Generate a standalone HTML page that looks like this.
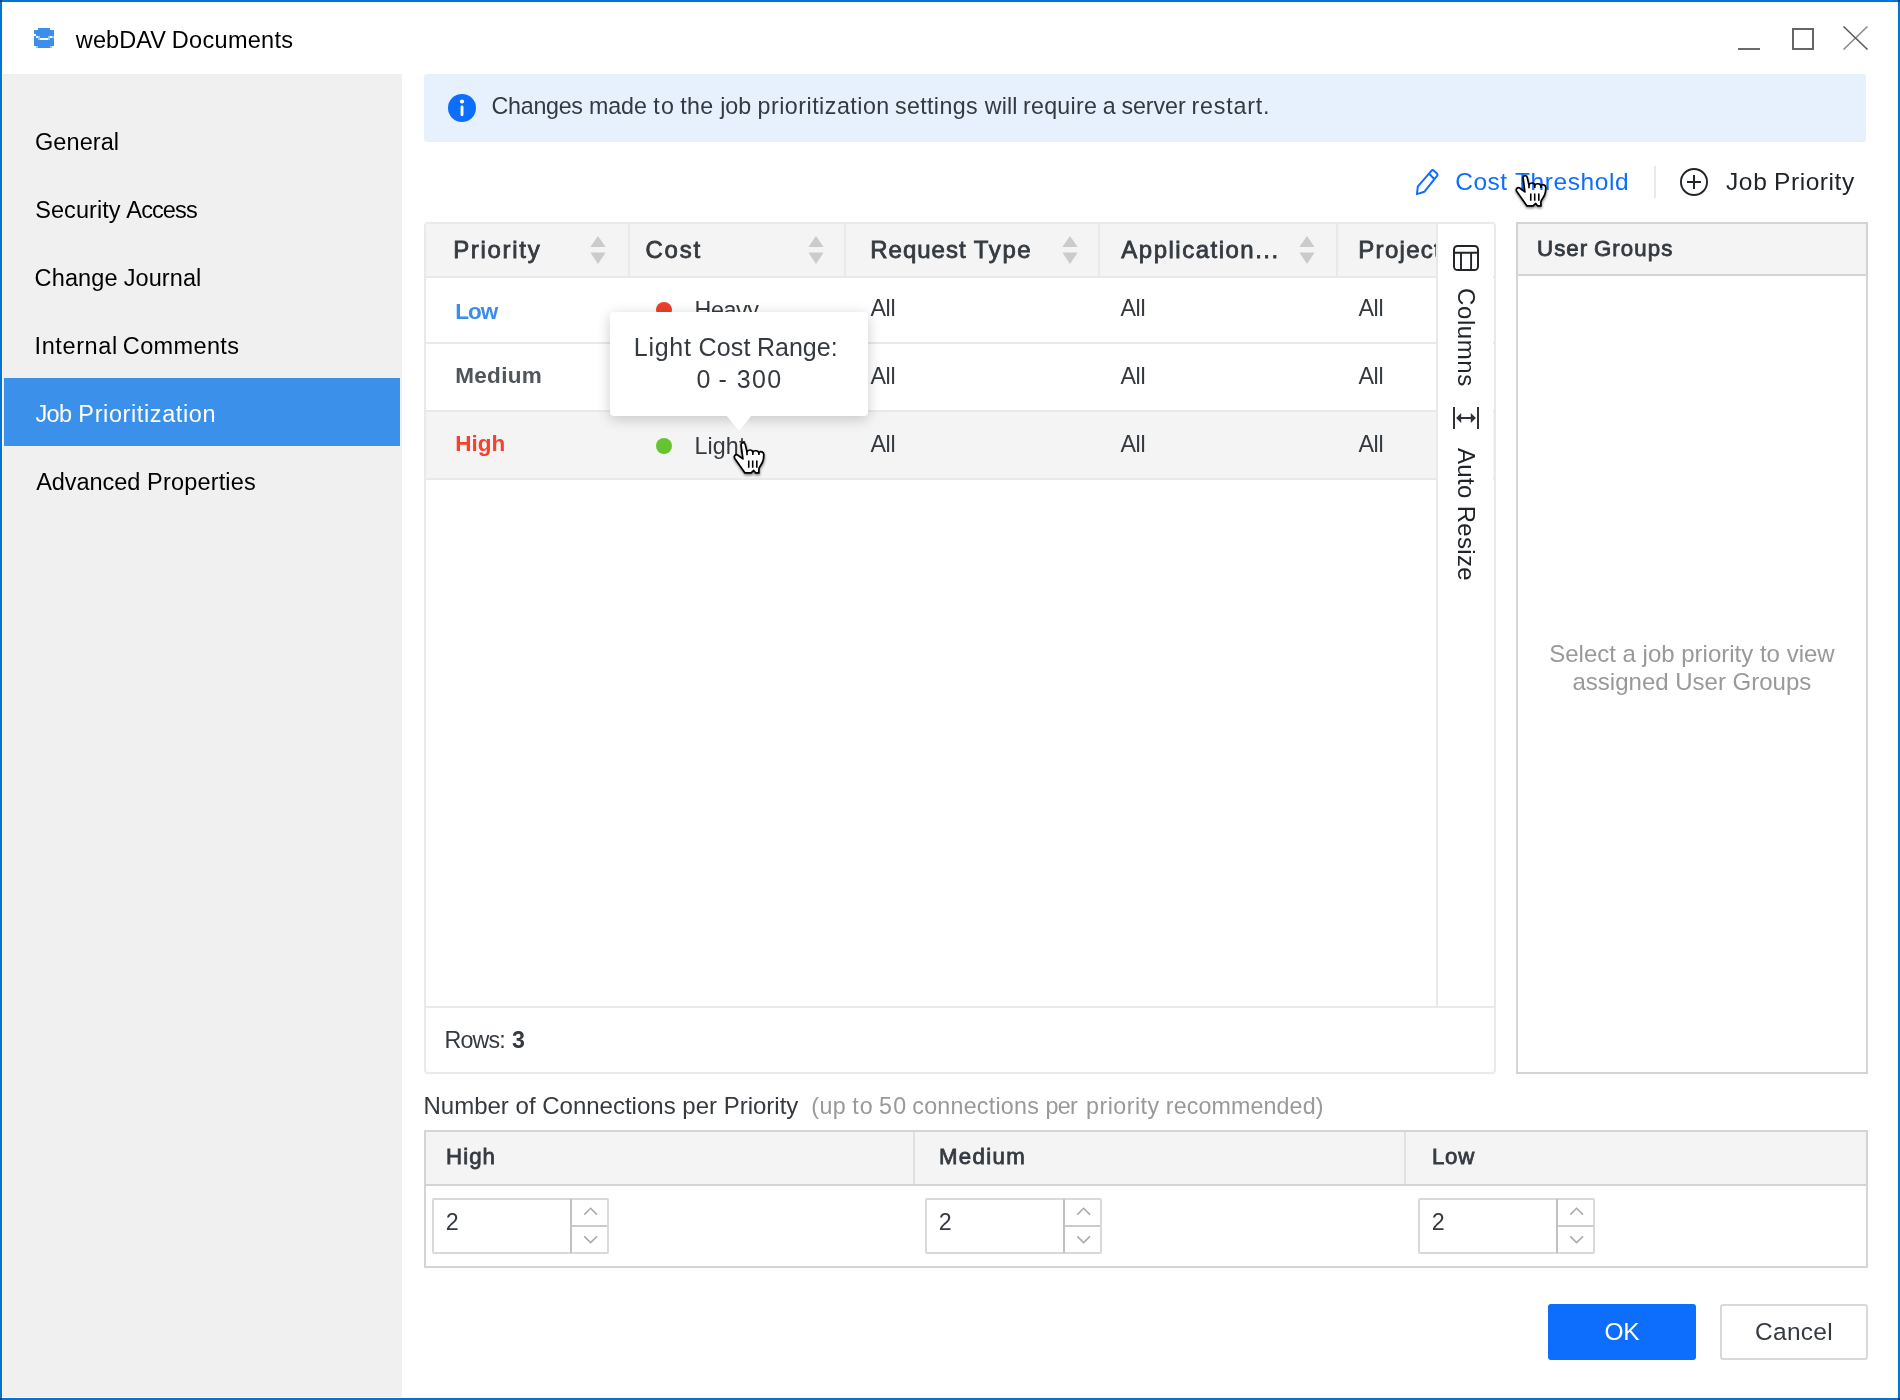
<!DOCTYPE html>
<html lang="en">
<head>
<meta charset="utf-8">
<title>webDAV Documents</title>
<style>
html,body{margin:0;padding:0;}
body{width:1900px;height:1400px;position:relative;overflow:hidden;background:#fff;font-family:"Liberation Sans", Arial, sans-serif;color:#343a40;}
.t{position:absolute;white-space:nowrap;line-height:1;}
svg{position:absolute;overflow:visible;}

</style>
</head>
<body>
<header class="titlebar">
<div style="position:absolute;left:0px;top:0px;width:1900px;height:1400px;box-sizing:border-box;border:2px solid #0274d3;pointer-events:none;z-index:50;"></div>
<div style="position:absolute;left:0px;top:0px;width:2px;height:2px;background:#02396a;z-index:51;"></div>
<div style="position:absolute;left:1898px;top:0px;width:2px;height:2px;background:#02396a;z-index:51;"></div>
<div style="position:absolute;left:0px;top:1398px;width:2px;height:2px;background:#02396a;z-index:51;"></div>
<div style="position:absolute;left:1898px;top:1398px;width:2px;height:2px;background:#02396a;z-index:51;"></div>
<svg style="left:34px;top:28px" width="20" height="20" viewBox="0 0 10 10" shape-rendering="crispEdges"><g fill="#3b8fea"><rect x="2" y="0" width="6" height="1"/><rect x="0" y="1" width="10" height="2"/><rect x="1" y="3" width="9" height="1"/><rect x="0" y="4" width="1" height="1"/><rect x="3" y="4" width="4" height="1"/><rect x="0" y="5" width="2" height="1"/><rect x="8" y="5" width="2" height="1"/><rect x="0" y="6" width="10" height="3"/><rect x="2" y="9" width="6" height="1"/></g><g fill="#9cc7f4"><rect x="2" y="4" width="1" height="2"/><rect x="7" y="4" width="1" height="2"/><rect x="9" y="4" width="1" height="1"/><rect x="1" y="9" width="1" height="1"/><rect x="8" y="9" width="1" height="1"/></g></svg>
<span class="t" style="left:75.83px;top:28.61px;font-size:23.5px;color:#000;letter-spacing:0.096px;">webDAV</span>
<span class="t" style="left:171.87px;top:28.61px;font-size:23.5px;color:#000;letter-spacing:0.290px;">Documents</span>
<div style="position:absolute;left:1738px;top:48px;width:22px;height:2px;background:#6b6b6b;"></div>
<div style="position:absolute;left:1792px;top:28px;width:22px;height:22px;box-sizing:border-box;border:2px solid #666;"></div>
<svg style="left:1843px;top:26px" width="25" height="24" viewBox="0 0 25 24"><path d="M24.5 0.5 L0.5 23.5" stroke="#8a8a8a" stroke-width="1.6" fill="none"/><path d="M0.5 0.5 L24.5 23.5" stroke="#5a5a5a" stroke-width="1.6" fill="none"/></svg>
</header>
<nav class="sidebar" aria-label="Sections">
<div style="position:absolute;left:2px;top:74px;width:400px;height:1324px;background:#f0f0f0;border-left:1px solid #fcf7f1;border-bottom:1px solid #fcf7f1;box-sizing:border-box;"></div>
<div style="position:absolute;left:4px;top:378px;width:396px;height:68px;background:#3b91ea;"></div>
<span class="t" style="left:35.02px;top:130.61px;font-size:23.5px;color:#000;letter-spacing:0.074px;">General</span>
<span class="t" style="left:35.23px;top:198.61px;font-size:23.5px;color:#000;letter-spacing:0.060px;">Security</span>
<span class="t" style="left:126.35px;top:198.61px;font-size:23.5px;color:#000;letter-spacing:-0.891px;">Access</span>
<span class="t" style="left:34.61px;top:266.61px;font-size:23.5px;color:#000;letter-spacing:0.122px;">Change</span>
<span class="t" style="left:123.63px;top:266.61px;font-size:23.5px;color:#000;letter-spacing:0.094px;">Journal</span>
<span class="t" style="left:34.53px;top:334.61px;font-size:23.5px;color:#000;letter-spacing:0.607px;">Internal</span>
<span class="t" style="left:122.81px;top:334.61px;font-size:23.5px;color:#000;letter-spacing:0.374px;">Comments</span>
<span class="t" style="left:35.43px;top:402.61px;font-size:23.5px;color:#fff;letter-spacing:-0.668px;">Job</span>
<span class="t" style="left:78.37px;top:402.61px;font-size:23.5px;color:#fff;letter-spacing:0.604px;">Prioritization</span>
<span class="t" style="left:36.25px;top:470.61px;font-size:23.5px;color:#000;letter-spacing:-0.067px;">Advanced</span>
<span class="t" style="left:147.07px;top:470.61px;font-size:23.5px;color:#000;letter-spacing:0.174px;">Properties</span>
</nav>
<main class="content">
<section class="banner" role="status">
<div style="position:absolute;left:424px;top:74px;width:1442px;height:68px;background:#e7f0fd;border-radius:3px;"></div>
<svg style="left:448px;top:94px" width="28" height="28" viewBox="0 0 28 28"><circle cx="14" cy="14" r="14" fill="#0d6efd"/><ellipse cx="14" cy="7.5" rx="2.1" ry="1.9" fill="#fff"/><rect x="12.55" y="11.6" width="2.9" height="10.7" rx="1.45" fill="#fff"/></svg>
<span class="t" style="left:491.62px;top:94.82px;font-size:23.25px;letter-spacing:-0.293px;">Changes</span>
<span class="t" style="left:588.96px;top:94.82px;font-size:23.25px;letter-spacing:-0.098px;">made</span>
<span class="t" style="left:653.15px;top:94.82px;font-size:23.25px;letter-spacing:1.438px;">to</span>
<span class="t" style="left:680.35px;top:94.82px;font-size:23.25px;letter-spacing:0.228px;">the</span>
<span class="t" style="left:720.37px;top:94.82px;font-size:23.25px;letter-spacing:-0.161px;">job</span>
<span class="t" style="left:757.50px;top:94.82px;font-size:23.25px;letter-spacing:0.497px;">prioritization</span>
<span class="t" style="left:894.95px;top:94.82px;font-size:23.25px;letter-spacing:0.364px;">settings</span>
<span class="t" style="left:984.83px;top:94.82px;font-size:23.25px;letter-spacing:0.075px;">will</span>
<span class="t" style="left:1023.06px;top:94.82px;font-size:23.25px;letter-spacing:0.234px;">require</span>
<span class="t" style="left:1102.81px;top:94.82px;font-size:23.25px;letter-spacing:-2.050px;">a</span>
<span class="t" style="left:1121.45px;top:94.82px;font-size:23.25px;letter-spacing:-0.075px;">server</span>
<span class="t" style="left:1191.46px;top:94.82px;font-size:23.25px;letter-spacing:0.815px;">restart.</span>
</section>
<section class="toolbar">
<svg style="left:1405px;top:160px" width="45" height="45" viewBox="0 0 45 45"><path d="M12.9 26.4 L26.6 10.7 Q27.6 9.6 28.7 10.6 L32 13.5 Q33.1 14.5 32.2 15.7 L19.3 31.8 L11.9 34.1 Z M24.1 13.8 L29.3 19" fill="none" stroke="#0d6efd" stroke-width="2" stroke-linejoin="round" stroke-linecap="round"/></svg>
<span class="t" style="left:1455.26px;top:169.76px;font-size:24.5px;color:#0d6efd;letter-spacing:0.511px;">Cost</span>
<span class="t" style="left:1514.95px;top:169.76px;font-size:24.5px;color:#0d6efd;letter-spacing:0.585px;">Threshold</span>
<div style="position:absolute;left:1654px;top:166px;width:2px;height:32px;background:#e9e9e9;"></div>
<svg style="left:1679px;top:167px" width="30" height="30" viewBox="0 0 30 30"><circle cx="15" cy="15" r="13.05" fill="none" stroke="#212529" stroke-width="1.9"/><path d="M8 15 H22 M15 8 V22" stroke="#212529" stroke-width="2" fill="none"/></svg>
<span class="t" style="left:1725.92px;top:169.76px;font-size:24.5px;color:#212529;letter-spacing:0.698px;">Job</span>
<span class="t" style="left:1773.99px;top:169.76px;font-size:24.5px;color:#212529;letter-spacing:0.575px;">Priority</span>
</section>
<section class="grid" aria-label="Job priorities">
<div style="position:absolute;left:424px;top:222px;width:1072px;height:852px;box-sizing:border-box;border:2px solid #e8eaea;border-radius:4px;background:#fff;"></div>
<div style="position:absolute;left:426px;top:224px;width:1011px;height:52px;background:#f4f4f4;"></div>
<div style="position:absolute;left:426px;top:276px;width:1068px;height:2px;background:#e8eaea;"></div>
<div style="position:absolute;left:628px;top:224px;width:2px;height:52px;background:#e8eaea;"></div>
<div style="position:absolute;left:844px;top:224px;width:2px;height:52px;background:#e8eaea;"></div>
<div style="position:absolute;left:1098px;top:224px;width:2px;height:52px;background:#e8eaea;"></div>
<div style="position:absolute;left:1336px;top:224px;width:2px;height:52px;background:#e8eaea;"></div>
<span class="t" style="left:453.13px;top:238.18px;font-size:24px;letter-spacing:1.692px;-webkit-text-stroke:0.8px #343a40;">Priority</span>
<svg style="left:589.5px;top:236.3px" width="16" height="28" viewBox="0 0 16 28"><path d="M8 0 L15.6 11 H0.4 Z M0.4 16.6 H15.6 L8 28 Z" fill="#cbcbcb"/></svg>
<span class="t" style="left:645.48px;top:238.18px;font-size:24px;letter-spacing:1.778px;-webkit-text-stroke:0.8px #343a40;">Cost</span>
<svg style="left:807.5px;top:236.3px" width="16" height="28" viewBox="0 0 16 28"><path d="M8 0 L15.6 11 H0.4 Z M0.4 16.6 H15.6 L8 28 Z" fill="#cbcbcb"/></svg>
<span class="t" style="left:870.23px;top:238.18px;font-size:24px;letter-spacing:0.992px;-webkit-text-stroke:0.8px #343a40;">Request</span>
<span class="t" style="left:973.86px;top:238.18px;font-size:24px;letter-spacing:1.591px;-webkit-text-stroke:0.8px #343a40;">Type</span>
<svg style="left:1061.5px;top:236.3px" width="16" height="28" viewBox="0 0 16 28"><path d="M8 0 L15.6 11 H0.4 Z M0.4 16.6 H15.6 L8 28 Z" fill="#cbcbcb"/></svg>
<span class="t" style="left:1121.35px;top:238.18px;font-size:24px;letter-spacing:1.494px;-webkit-text-stroke:0.8px #343a40;">Application...</span>
<svg style="left:1299.3px;top:236.3px" width="16" height="28" viewBox="0 0 16 28"><path d="M8 0 L15.6 11 H0.4 Z M0.4 16.6 H15.6 L8 28 Z" fill="#cbcbcb"/></svg>
<div style="position:absolute;left:1338px;top:224px;width:99px;height:52px;overflow:hidden;"><div class="t" style="left:20.3px;top:14.18px;font-size:24px;-webkit-text-stroke:0.8px #343a40;letter-spacing:1.3px">Project</div></div>
<div style="position:absolute;left:426px;top:412px;width:1068px;height:66px;background:#f4f4f4;"></div>
<div style="position:absolute;left:426px;top:342px;width:1068px;height:2px;background:#e8eaea;"></div>
<div style="position:absolute;left:426px;top:410px;width:1068px;height:2px;background:#e8eaea;"></div>
<div style="position:absolute;left:426px;top:478px;width:1068px;height:2px;background:#e8eaea;"></div>
<div class="t" style="left:455.20px;top:301.45px;font-size:22.5px;font-weight:700;color:#3a8de8;letter-spacing:-1.000px;">Low</div>
<div style="position:absolute;left:656px;top:302px;width:16px;height:16px;background:#ec3f2a;border-radius:50%;"></div>
<div class="t" style="left:694.50px;top:298.82px;font-size:23.25px;letter-spacing:-0.381px;">Heavy</div>
<div class="t" style="left:870.40px;top:296.82px;font-size:23.25px;letter-spacing:-0.281px;">All</div>
<div class="t" style="left:1120.40px;top:296.82px;font-size:23.25px;letter-spacing:-0.281px;">All</div>
<div class="t" style="left:1358.40px;top:296.82px;font-size:23.25px;letter-spacing:-0.281px;">All</div>
<div class="t" style="left:455.20px;top:365.45px;font-size:22.5px;font-weight:700;color:#4f555b;letter-spacing:0.331px;">Medium</div>
<div class="t" style="left:870.40px;top:364.82px;font-size:23.25px;letter-spacing:-0.281px;">All</div>
<div class="t" style="left:1120.40px;top:364.82px;font-size:23.25px;letter-spacing:-0.281px;">All</div>
<div class="t" style="left:1358.40px;top:364.82px;font-size:23.25px;letter-spacing:-0.281px;">All</div>
<div class="t" style="left:455.20px;top:433.45px;font-size:22.5px;font-weight:700;color:#f4422c;">High</div>
<div style="position:absolute;left:656px;top:438px;width:16px;height:16px;background:#64c531;border-radius:50%;"></div>
<div class="t" style="left:694.50px;top:434.82px;font-size:23.25px;letter-spacing:0.116px;">Light</div>
<div class="t" style="left:870.40px;top:432.82px;font-size:23.25px;letter-spacing:-0.281px;">All</div>
<div class="t" style="left:1120.40px;top:432.82px;font-size:23.25px;letter-spacing:-0.281px;">All</div>
<div class="t" style="left:1358.40px;top:432.82px;font-size:23.25px;letter-spacing:-0.281px;">All</div>
<div style="position:absolute;left:426px;top:1006px;width:1068px;height:2px;background:#e8eaea;"></div>
<div class="t" style="left:444.50px;top:1028.82px;font-size:23.25px;letter-spacing:-0.822px;">Rows:</div>
<div class="t" style="left:512.00px;top:1028.82px;font-size:23.25px;font-weight:700;">3</div>
<div style="position:absolute;left:1438px;top:224px;width:55px;height:782px;background:#fff;"></div>
<div style="position:absolute;left:1436px;top:224px;width:2px;height:782px;background:#e8eaea;"></div>
<svg style="left:1453px;top:245px" width="26" height="26" viewBox="0 0 26 26"><rect x="1" y="1" width="24" height="24" rx="3.6" fill="none" stroke="#212529" stroke-width="2"/><path d="M1 7.7 H25 M8 7.7 V25 M18.1 7.7 V25" stroke="#212529" stroke-width="1.9" fill="none"/></svg>
<svg style="left:1453px;top:407px" width="26" height="22" viewBox="0 0 26 22"><path d="M0 0 H2 V22 H0 Z M24 0 H26 V22 H24 Z M3.1 11 L8.2 6 V10 H17.8 V6 L22.9 11 L17.8 16 V12 H8.2 V16 Z" fill="#2f3338"/></svg>
<div class="t" style="left:1477.52px;top:287.9px;font-size:24px;transform-origin:0 0;transform:rotate(90deg);letter-spacing:0.6px;color:#212529">Columns</div>
<div class="t" style="left:1477.52px;top:448.4px;font-size:24px;transform-origin:0 0;transform:rotate(90deg);letter-spacing:0.33px;color:#212529">Auto Resize</div>
</section>
<section class="user-groups">
<div style="position:absolute;left:1516px;top:222px;width:352px;height:852px;box-sizing:border-box;border:2px solid #d4d4d4;background:#fff;"></div>
<div style="position:absolute;left:1518px;top:224px;width:348px;height:50px;background:#f4f4f4;"></div>
<div style="position:absolute;left:1518px;top:274px;width:350px;height:2px;background:#d4d4d4;"></div>
<span class="t" style="left:1537.08px;top:237.67px;font-size:22.25px;letter-spacing:1.034px;-webkit-text-stroke:0.8px #343a40;">User</span>
<span class="t" style="left:1593.88px;top:237.67px;font-size:22.25px;letter-spacing:1.111px;-webkit-text-stroke:0.8px #343a40;">Groups</span>
<div class="t" style="left:1549.20px;top:642.18px;font-size:24px;color:#999;">Select a job priority to view</div>
<div class="t" style="left:1572.50px;top:670.18px;font-size:24px;color:#999;">assigned User Groups</div>
</section>
<section class="connections">
<div class="t" style="left:423.50px;top:1094.18px;font-size:24px;">Number of Connections per Priority</div>
<span class="t" style="left:811.36px;top:1094.82px;font-size:23.25px;color:#999;letter-spacing:0.404px;">(up</span>
<span class="t" style="left:852.25px;top:1094.82px;font-size:23.25px;color:#999;letter-spacing:1.138px;">to</span>
<span class="t" style="left:879.07px;top:1094.82px;font-size:23.25px;color:#999;letter-spacing:1.164px;">50</span>
<span class="t" style="left:912.31px;top:1094.82px;font-size:23.25px;color:#999;letter-spacing:0.243px;">connections</span>
<span class="t" style="left:1045.40px;top:1094.82px;font-size:23.25px;color:#999;letter-spacing:-0.612px;">per</span>
<span class="t" style="left:1086.10px;top:1094.82px;font-size:23.25px;color:#999;letter-spacing:0.454px;">priority</span>
<span class="t" style="left:1165.86px;top:1094.82px;font-size:23.25px;color:#999;letter-spacing:0.111px;">recommended)</span>
<div style="position:absolute;left:424px;top:1130px;width:1444px;height:138px;box-sizing:border-box;border:2px solid #d4d4d4;background:#fff;"></div>
<div style="position:absolute;left:426px;top:1132px;width:1440px;height:52px;background:#f4f4f4;"></div>
<div style="position:absolute;left:426px;top:1184px;width:1440px;height:2px;background:#d4d4d4;"></div>
<div style="position:absolute;left:913px;top:1132px;width:2px;height:52px;background:#e0e0e0;"></div>
<div style="position:absolute;left:1404px;top:1132px;width:2px;height:52px;background:#e0e0e0;"></div>
<div class="t" style="left:446.00px;top:1145.67px;font-size:22.25px;letter-spacing:1.059px;-webkit-text-stroke:0.8px #343a40;">High</div>
<div class="t" style="left:939.00px;top:1145.67px;font-size:22.25px;letter-spacing:1.310px;-webkit-text-stroke:0.8px #343a40;">Medium</div>
<div class="t" style="left:1432.00px;top:1145.67px;font-size:22.25px;letter-spacing:0.724px;-webkit-text-stroke:0.8px #343a40;">Low</div>
<div style="position:absolute;left:432px;top:1197.5px;width:177px;height:56px;box-sizing:border-box;border:2px solid #d9d9d9;background:#fff;border-radius:2px;"></div>
<div style="position:absolute;left:570.3px;top:1198.5px;width:1.8px;height:54px;background:#bfc1c2;"></div>
<div style="position:absolute;left:572px;top:1224.5px;width:35px;height:2px;background:#cbcbcb;"></div>
<svg style="left:432px;top:1197px" width="178" height="57" viewBox="0 0 178 57"><path d="M152.3 17.6 L158.6 11.3 L165 17.6 M152.3 39.4 L158.6 45.6 L165 39.4" stroke="#a9acae" stroke-width="1.6" fill="none"/></svg>
<div class="t" style="left:445.80px;top:1210.82px;font-size:23.25px;">2</div>
<div style="position:absolute;left:925px;top:1197.5px;width:177px;height:56px;box-sizing:border-box;border:2px solid #d9d9d9;background:#fff;border-radius:2px;"></div>
<div style="position:absolute;left:1063.3px;top:1198.5px;width:1.8px;height:54px;background:#bfc1c2;"></div>
<div style="position:absolute;left:1065px;top:1224.5px;width:35px;height:2px;background:#cbcbcb;"></div>
<svg style="left:925px;top:1197px" width="178" height="57" viewBox="0 0 178 57"><path d="M152.3 17.6 L158.6 11.3 L165 17.6 M152.3 39.4 L158.6 45.6 L165 39.4" stroke="#a9acae" stroke-width="1.6" fill="none"/></svg>
<div class="t" style="left:938.80px;top:1210.82px;font-size:23.25px;">2</div>
<div style="position:absolute;left:1418px;top:1197.5px;width:177px;height:56px;box-sizing:border-box;border:2px solid #d9d9d9;background:#fff;border-radius:2px;"></div>
<div style="position:absolute;left:1556.3px;top:1198.5px;width:1.8px;height:54px;background:#bfc1c2;"></div>
<div style="position:absolute;left:1558px;top:1224.5px;width:35px;height:2px;background:#cbcbcb;"></div>
<svg style="left:1418px;top:1197px" width="178" height="57" viewBox="0 0 178 57"><path d="M152.3 17.6 L158.6 11.3 L165 17.6 M152.3 39.4 L158.6 45.6 L165 39.4" stroke="#a9acae" stroke-width="1.6" fill="none"/></svg>
<div class="t" style="left:1431.80px;top:1210.82px;font-size:23.25px;">2</div>
</section>
<footer class="buttons">
<div style="position:absolute;left:1548px;top:1304px;width:148px;height:56px;background:#0d6efd;border-radius:3px;"></div>
<div class="t" style="left:1604.60px;top:1319.76px;font-size:24.5px;color:#fff;letter-spacing:-0.453px;">OK</div>
<div style="position:absolute;left:1720px;top:1304px;width:148px;height:56px;box-sizing:border-box;border:2px solid #d9d9d9;border-radius:3px;background:#fff;"></div>
<div class="t" style="left:1755.00px;top:1319.76px;font-size:24.5px;letter-spacing:0.289px;">Cancel</div>
</footer>
</main>
<div class="tooltip" role="tooltip">
<div style="position:absolute;left:610px;top:312px;width:258px;height:104px;background:#fff;border-radius:4px;box-shadow:0 3px 14px rgba(0,0,0,0.2);z-index:20;"></div>
<svg style="left:726px;top:415px;z-index:21" width="26" height="17" viewBox="0 0 26 17"><path d="M0 0 H26 L13 16 Z" fill="#fff"/></svg>
<span class="t" style="left:633.75px;top:335.34px;font-size:25px;letter-spacing:0.754px;z-index:22;">Light</span>
<span class="t" style="left:698.43px;top:335.34px;font-size:25px;letter-spacing:0.182px;z-index:22;">Cost</span>
<span class="t" style="left:757.05px;top:335.34px;font-size:25px;letter-spacing:-0.018px;z-index:22;">Range:</span>
<span class="t" style="left:696.52px;top:367.34px;font-size:25px;letter-spacing:-0.153px;z-index:22;">0</span>
<span class="t" style="left:718.49px;top:367.34px;font-size:25px;letter-spacing:2.694px;z-index:22;">-</span>
<span class="t" style="left:736.65px;top:367.34px;font-size:25px;letter-spacing:1.455px;z-index:22;">300</span>
</div>
<div class="cursors" aria-hidden="true">
<svg style="left:733.0px;top:441.0px;z-index:30;" width="33" height="35" viewBox="0 0 33 35"><defs><filter id="hs1" x="-30%" y="-30%" width="160%" height="170%"><feDropShadow dx="0.3" dy="1.5" stdDeviation="0.9" flood-color="#000" flood-opacity="0.5"/></filter></defs><path filter="url(#hs1)" d="M9.9 17.9 L8.1 4.2 C7.6 1.4 11.6 0.6 12.3 3.6 L14 11 C14.8 8.6 19.4 8 19.8 11.4 C20.6 9 25.4 9.2 25.9 12 C27 9.8 31 10.6 30.8 14 C30.8 17 30.2 19.5 29.5 21.1 C28.5 24 26 25.5 25.9 27.9 L25.9 31.9 L22.7 31.9 L20.75 29.4 L18.1 31.9 L12 31.9 L1.6 17.3 C0.4 15.2 2.6 12.8 4.6 14 Z" fill="#fff" stroke="#000" stroke-width="1.7" stroke-linejoin="round"/><path d="M14 11 V14.2 M19.8 11.4 V14 M25.9 12 V14 M15.75 19.4 V26.8 M19.7 19.4 V26.8 M23.8 19.4 V26.8" stroke="#000" stroke-width="1.6" fill="none"/></svg>
<svg style="left:1515.1px;top:174.4px;z-index:30;mix-blend-mode:multiply;" width="33" height="35" viewBox="0 0 33 35"><defs><filter id="hs2" x="-30%" y="-30%" width="160%" height="170%"><feDropShadow dx="0.3" dy="1.5" stdDeviation="0.9" flood-color="#000" flood-opacity="0.5"/></filter></defs><path filter="url(#hs2)" d="M9.9 17.9 L8.1 4.2 C7.6 1.4 11.6 0.6 12.3 3.6 L14 11 C14.8 8.6 19.4 8 19.8 11.4 C20.6 9 25.4 9.2 25.9 12 C27 9.8 31 10.6 30.8 14 C30.8 17 30.2 19.5 29.5 21.1 C28.5 24 26 25.5 25.9 27.9 L25.9 31.9 L22.7 31.9 L20.75 29.4 L18.1 31.9 L12 31.9 L1.6 17.3 C0.4 15.2 2.6 12.8 4.6 14 Z" fill="#fff" stroke="#000" stroke-width="1.7" stroke-linejoin="round"/><path d="M14 11 V14.2 M19.8 11.4 V14 M25.9 12 V14 M15.75 19.4 V26.8 M19.7 19.4 V26.8 M23.8 19.4 V26.8" stroke="#000" stroke-width="1.6" fill="none"/></svg>
</div>
</body>
</html>
